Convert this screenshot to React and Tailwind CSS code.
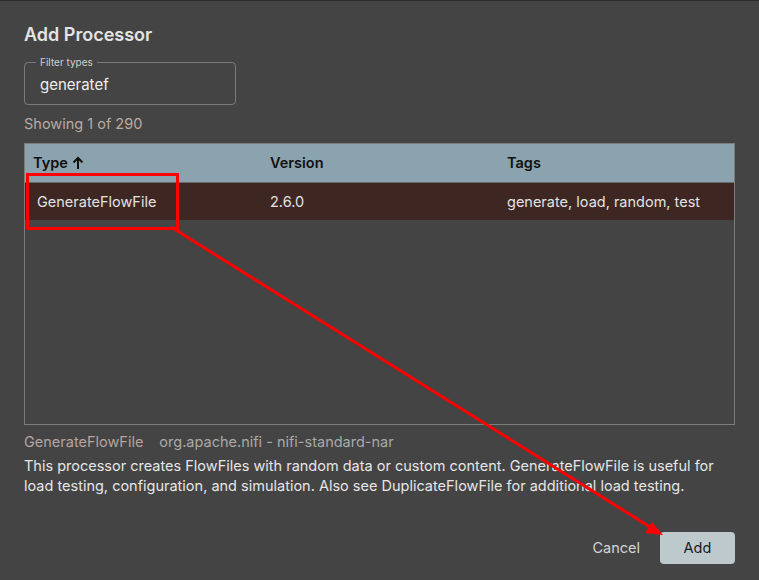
import React from "react";

const rows = [
  { type: "GenerateFlowFile", version: "2.6.0", tags: "generate, load, random, test" },
];

const Annotation = () => (
  <svg className="absolute inset-0 pointer-events-none" width="759" height="580" viewBox="0 0 759 580">
    <rect x="27.5" y="173.5" width="150" height="54" fill="none" stroke="#ff0000" strokeWidth="3" />
    <line x1="171" y1="226" x2="650" y2="526" stroke="#ff0000" strokeWidth="3" />
    <polygon points="663,534 645,532 652,521" fill="#ff0000" />
  </svg>
);

export default function App() {
  return (
    <div className="relative w-[759px] h-[580px] bg-[#444444] border-t border-[#2e2e2e] font-['Inter','Liberation_Sans',sans-serif] flex flex-col px-6 overflow-hidden">
      <h2 className="mt-[22px] text-[18px] leading-6 font-semibold text-[#e4e4e4]">Add Processor</h2>

      {/* filtro */}
      <div className="relative mt-[15px] w-[212px] h-[43px] border border-[#7a7a7a] rounded flex items-center px-[15px] pt-[3px]">
        <span className="absolute -top-[7px] left-[11px] px-1 bg-[#444444] text-[10px] leading-3 text-[#d0d0d0]">Filter types</span>
        <span className="text-[15px] text-[#eeeeee]">generatef</span>
      </div>

      <div className="mt-[9px] text-[14.5px] leading-5 text-[#b9aaa2]">Showing 1 of 290</div>

      <div className="mt-[9px] h-[282px] border border-[#7c7c7c]">
        <div className="grid grid-cols-[237px_237px_1fr] h-[39px] items-center bg-[#8ba3ae] border-b border-[#6a6a6a] text-[14.5px] font-semibold text-[#111]">
          <div className="pl-2 flex items-center gap-1">
            Type
            <svg width="12" height="14" viewBox="0 0 12 14" fill="none" stroke="#111" strokeWidth="2">
              <path d="M6 13V2M1.5 6.5L6 2l4.5 4.5" />
            </svg>
          </div>
          <div className="pl-[8px]">Version</div>
          <div className="pl-[8px]">Tags</div>
        </div>
        {rows.map((r) => (
          <div key={r.type} className="grid grid-cols-[237px_237px_1fr] h-[37px] items-center bg-[#3e2723] text-[14.5px] text-[#e2e2e2]">
            <div className="pl-3">{r.type}</div>
            <div className="pl-[8px]">{r.version}</div>
            <div className="pl-[8px]">{r.tags}</div>
          </div>
        ))}
      </div>

      <div className="mt-[7px] flex gap-4 text-[14.5px] leading-5">
        <span className="text-[#b8a3a0]">GenerateFlowFile</span>
        <span className="text-[#a9a9a9]">org.apache.nifi - nifi-standard-nar</span>
      </div>
      <p className="mt-[4px] text-[14.5px] leading-5 text-[#e6e6e6]">
        This processor creates FlowFiles with random data or custom content. GenerateFlowFile is useful for load testing, configuration, and simulation. Also see DuplicateFlowFile for additional load testing.
      </p>

      <div className="mt-auto mb-4 flex justify-end items-center gap-5">
        <button className="text-[14.5px] text-[#d4d4d4]">Cancel</button>
        <button className="w-[75px] h-[32px] rounded bg-[#bec9cd] text-[14.5px] text-[#1b1b1b]">Add</button>
      </div>

      <Annotation />
    </div>
  );
}
